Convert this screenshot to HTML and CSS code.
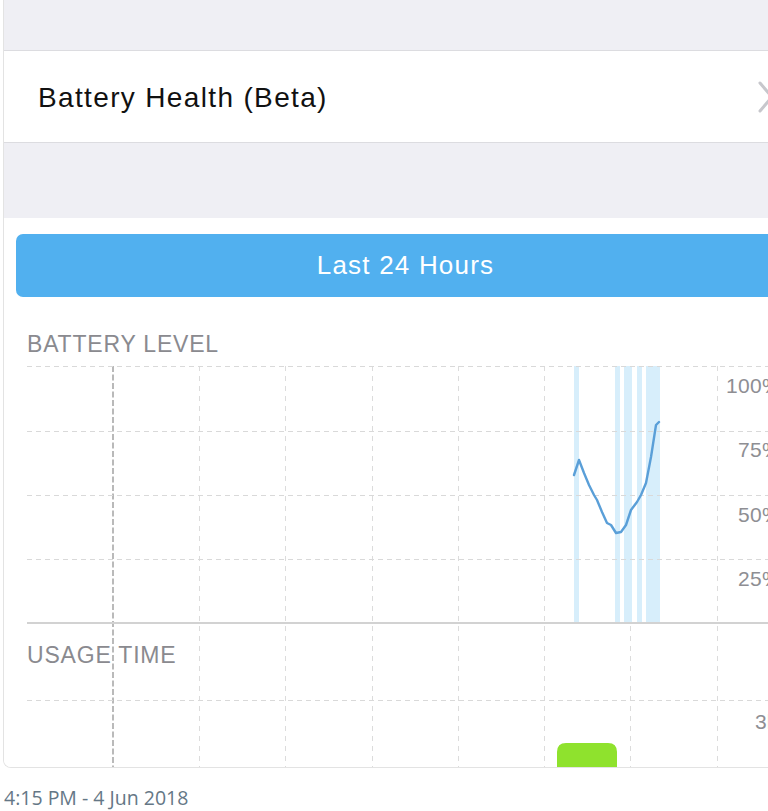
FILE: index.html
```html
<!DOCTYPE html>
<html lang="en">
<head>
<meta charset="utf-8">
<title>Battery Health (Beta)</title>
<link rel="stylesheet" href="styles.css">
</head>
<body>
<div class="media">
  <div class="grey-top"></div>
  <div class="row">
    <span class="row-title">Battery Health (Beta)</span>
    <svg class="chevron" width="16" height="32" viewBox="0 0 16 32"><path d="M2 2 L14 16 L2 30" fill="none" stroke="#c7c7cc" stroke-width="3" stroke-linecap="round" stroke-linejoin="round"/></svg>
  </div>
  <div class="grey-mid"></div>
  <div class="content">
    <div class="seg-button">Last 24 Hours</div>
    <div class="chart-area">
      <svg class="grid-v" width="804" height="402" viewBox="0 0 804 402">
        <line x1="109" y1="0" x2="109" y2="402" stroke="#a3a3a3" stroke-width="1.5" stroke-dasharray="6 2.5"/>
        <g stroke="#dcdcdc" stroke-width="1" stroke-dasharray="5 5">
          <line x1="195.5" y1="0" x2="195.5" y2="402"/>
          <line x1="281.5" y1="0" x2="281.5" y2="402"/>
          <line x1="368.5" y1="0" x2="368.5" y2="402"/>
          <line x1="454.5" y1="0" x2="454.5" y2="402"/>
          <line x1="540.5" y1="0" x2="540.5" y2="402"/>
          <line x1="626.5" y1="0" x2="626.5" y2="402"/>
          <line x1="713.5" y1="0" x2="713.5" y2="402"/>
        </g>
      </svg>
      <div class="chart-label first">BATTERY LEVEL</div>
      <div class="battery">
        <svg class="battery-svg" width="781" height="258" viewBox="0 0 781 258">
          <g fill="#d7eefb">
            <rect x="547" y="0" width="5" height="257"/>
            <rect x="588" y="0" width="5" height="257"/>
            <rect x="597" y="0" width="8" height="257"/>
            <rect x="610" y="0" width="5" height="257"/>
            <rect x="619" y="0" width="14" height="257"/>
          </g>
          <g stroke="#d9d9d9" stroke-width="1" stroke-dasharray="5 4">
            <line x1="0" y1="0.5" x2="781" y2="0.5"/>
            <line x1="0" y1="65.5" x2="781" y2="65.5"/>
            <line x1="0" y1="129.5" x2="781" y2="129.5"/>
            <line x1="0" y1="193.5" x2="781" y2="193.5"/>
          </g>
          <line x1="0" y1="257" x2="781" y2="257" stroke="#d2d2d2" stroke-width="2"/>
          <polyline fill="none" stroke="#5a9fd8" stroke-width="2.4" stroke-linejoin="round" stroke-linecap="round" points="547,109 552,94 557,107 562,119 567,129 570,134 575,146 580,157 584,159 589,167 594,166 599,159 604,144 610,136 614,129 619,117 624,91 629,59 632,56"/>
        </svg>
        <div class="y-axis">
          <span class="y-tick">100%</span>
          <span class="y-tick">75%</span>
          <span class="y-tick">50%</span>
          <span class="y-tick">25%</span>
        </div>
      </div>
      <div class="chart-label second">USAGE TIME</div>
      <div class="usage">
        <svg class="usage-svg" width="781" height="99" viewBox="0 0 781 99">
          <line x1="0" y1="31.5" x2="781" y2="31.5" stroke="#d9d9d9" stroke-width="1" stroke-dasharray="5 4"/>
          <path d="M530 110 L530 83 Q530 74 539 74 L581 74 Q590 74 590 83 L590 110 Z" fill="#8fe22d"/>
        </svg>
        <span class="usage-tick">3h</span>
      </div>
    </div>
  </div>
</div>
<div class="timestamp">4:15 PM - 4 Jun 2018</div>
</body>
</html>
```

FILE: styles.css
```css
html, body {
  margin: 0;
  padding: 0;
  overflow: hidden;
  background: #ffffff;
}

body {
  width: 768px;
  height: 811px;
  font-family: "Liberation Sans", Arial, sans-serif;
}

.media {
  margin-left: 3px;
  width: 804px;
  height: 768px;
  border-left: 1px solid #e3e3e3;
  border-bottom: 1px solid #e3e3e3;
  border-bottom-left-radius: 8px;
  overflow: hidden;
  box-sizing: border-box;
  background: #ffffff;
}

.grey-top {
  height: 50px;
  background: #efeff4;
}

.row {
  height: 91px;
  box-sizing: content-box;
  border-top: 1px solid #dcdce0;
  border-bottom: 1px solid #dcdce0;
  display: flex;
  align-items: center;
  padding-left: 34px;
  padding-right: 33px;
  background: #ffffff;
}

.row-title {
  font-size: 28px;
  letter-spacing: 1.35px;
  color: #111111;
  padding-top: 2px;
}

.chevron {
  margin-left: auto;
  display: block;
}

.grey-mid {
  height: 75px;
  background: #efeff4;
}

.content {
  padding-top: 16px;
  background: #ffffff;
}

.seg-button {
  margin: 0 12px;
  height: 63px;
  border-radius: 7px;
  background: #51b0ef;
  color: #ffffff;
  display: flex;
  align-items: center;
  justify-content: center;
  font-size: 26px;
  letter-spacing: 1.2px;
}

.chart-area {
  position: relative;
  padding-left: 23px;
}

.grid-v {
  position: absolute;
  left: 0;
  top: 69px;
  display: block;
}

.chart-label {
  position: relative;
  font-size: 23px;
  line-height: 28px;
  letter-spacing: 0.8px;
  color: #8a8a8f;
}

.chart-label.first {
  padding-top: 33px;
  margin-bottom: 8px;
}

.chart-label.second {
  margin-top: 17px;
}

.battery {
  position: relative;
  display: grid;
  height: 258px;
}

.battery-svg,
.y-axis {
  grid-area: 1 / 1;
}

.battery-svg {
  display: block;
}

.y-axis {
  justify-self: end;
  display: grid;
  grid-template-rows: repeat(4, 64.3px);
  width: 120px;
  padding-right: 27px;
}

.y-tick {
  text-align: right;
  font-size: 21px;
  line-height: 24px;
  padding-top: 8px;
  letter-spacing: 0.3px;
  color: #8e8e93;
}

.usage {
  position: relative;
  display: grid;
  height: 99px;
}

.usage-svg,
.usage-tick {
  grid-area: 1 / 1;
}

.usage-svg {
  display: block;
}

.usage-tick {
  justify-self: start;
  margin-left: 728px;
  margin-top: 41px;
  font-size: 21px;
  line-height: 24px;
  color: #8e8e93;
}

.timestamp {
  margin-top: 17px;
  padding-left: 4px;
  font-family: "Open Sans", "Noto Sans", sans-serif;
  font-size: 19.5px;
  line-height: 26px;
  color: #657786;
}
```
